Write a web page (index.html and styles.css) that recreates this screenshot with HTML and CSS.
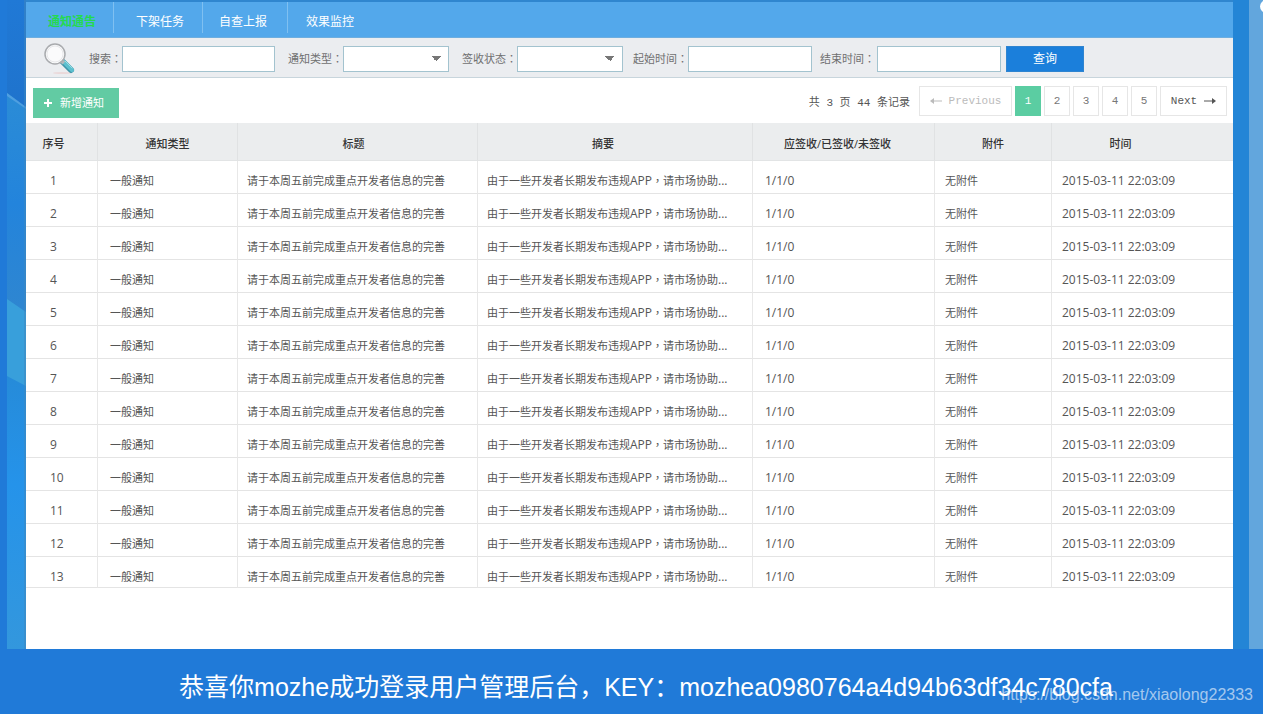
FILE: index.html
```
<!DOCTYPE html>
<html lang="zh-CN">
<head>
<meta charset="utf-8">
<meta name="viewport" content="width=device-width, initial-scale=1">
<title>用户管理后台</title>
<link rel="stylesheet" href="styles.css">
</head>
<body>
<main class="frame">
  <svg class="edge" viewBox="0 0 19 649" preserveAspectRatio="none" aria-hidden="true">
    <defs>
      <linearGradient id="deep" x1="0" y1="0" x2="0" y2="1">
        <stop offset="0" stop-color="#2079d6"/>
        <stop offset="1" stop-color="#1f73cc"/>
      </linearGradient>
      <linearGradient id="mid" x1="0" y1="0" x2="0" y2="1">
        <stop offset="0" stop-color="#2b8cd6"/>
        <stop offset="0.5" stop-color="#2384dc"/>
        <stop offset="1" stop-color="#2f86d0"/>
      </linearGradient>
      <linearGradient id="low" x1="0" y1="0" x2="0" y2="1">
        <stop offset="0" stop-color="#268bd9"/>
        <stop offset="0.4" stop-color="#2593ea"/>
        <stop offset="1" stop-color="#3397dd"/>
      </linearGradient>
    </defs>
    <rect width="19" height="110" fill="url(#deep)"/>
    <path d="M0 93 19 107V314H0Z" fill="url(#mid)"/>
    <path d="M0 93 19 107V109L0 96Z" fill="#4f9fe0"/>
    <path d="M0 299 19 312V388H0Z" fill="#389fdb"/>
    <path d="M0 376 19 386V649H0Z" fill="url(#low)"/>
    <rect x="17" width="2" height="649" fill="#4088be" opacity="0.5"/>
  </svg>

  <div class="panel">
    <nav class="tabs">
      <a class="tab tab-active" href="#">通知通告</a>
      <a class="tab" href="#">下架任务</a>
      <a class="tab" href="#">自查上报</a>
      <a class="tab" href="#">效果监控</a>
    </nav>

    <form class="filters">
      <svg class="magnifier" viewBox="0 0 32 32" aria-hidden="true">
        <ellipse cx="18" cy="30" rx="9" ry="1" fill="#ead9da"/>
        <path d="M19 19 27 27" stroke="#3f95a8" stroke-width="6" stroke-linecap="round"/>
        <path d="M20 19 28 27" stroke="#5cc0cf" stroke-width="4" stroke-linecap="round"/>
        <path d="M21 18 28 25" stroke="#9bdde4" stroke-width="1" stroke-linecap="round"/>
        <path d="M16 17 20 20" stroke="#b3b7bb" stroke-width="4"/>
        <circle cx="11" cy="11" r="10" fill="#fbfbfc" stroke="#a9abae" stroke-width="1.5"/>
        <circle cx="11" cy="11" r="8" fill="none" stroke="#e7e8ea" stroke-width="1"/>
      </svg>
      <label for="keyword">搜索<span class="mark" lang="zh-TW">：</span></label>
      <input class="box keyword" id="keyword" type="text">
      <label for="kind">通知类型<span class="mark" lang="zh-TW">：</span></label>
      <select class="box pick" id="kind"><option></option></select>
      <label for="state">签收状态<span class="mark" lang="zh-TW">：</span></label>
      <select class="box pick pick-state" id="state"><option></option></select>
      <label for="start">起始时间<span class="mark" lang="zh-TW">：</span></label>
      <input class="box date date-start" id="start" type="text">
      <label for="end">结束时间<span class="mark" lang="zh-TW">：</span></label>
      <input class="box date date-end" id="end" type="text">
      <button class="query" type="submit">查询</button>
    </form>

    <div class="toolbar">
      <button class="add" type="button">
        <svg class="plus" viewBox="0 0 8 8" aria-hidden="true"><path d="M4 0V8M0 4H8" stroke="#fff" stroke-width="2"/></svg>
        新增通知
      </button>
      <p class="count">共 3 页 44 条记录</p>
      <div class="pager">
        <button class="page page-prev" type="button" disabled>
          <svg class="arrow" viewBox="0 0 12 8" aria-hidden="true"><path d="M12 4H3" stroke="currentColor"/><path d="M0 4 4 1V7Z" fill="currentColor"/></svg>
          Previous
        </button>
        <button class="page page-current" type="button">1</button>
        <button class="page" type="button">2</button>
        <button class="page" type="button">3</button>
        <button class="page" type="button">4</button>
        <button class="page" type="button">5</button>
        <button class="page page-next" type="button">
          Next
          <svg class="arrow" viewBox="0 0 12 8" aria-hidden="true"><path d="M0 4H9" stroke="currentColor"/><path d="M12 4 8 1V7Z" fill="currentColor"/></svg>
        </button>
      </div>
    </div>

    <table class="notices">
      <colgroup>
        <col class="c-no"><col class="c-kind"><col class="c-title"><col class="c-brief"><col class="c-sign"><col class="c-file"><col class="c-time">
      </colgroup>
      <thead>
        <tr><th>序号</th><th>通知类型</th><th>标题</th><th>摘要</th><th>应签收/已签收/未签收</th><th>附件</th><th>时间</th></tr>
      </thead>
      <tbody>
        <tr><td>1</td><td>一般通知</td><td>请于本周五前完成重点开发者信息的完善</td><td>由于一些开发者长期发布违规<span class="latin">APP</span><span class="mark" lang="zh-TW">，</span>请市场协助<span class="latin">...</span></td><td>1/1/0</td><td>无附件</td><td>2015-03-11 22:03:09</td></tr>
        <tr><td>2</td><td>一般通知</td><td>请于本周五前完成重点开发者信息的完善</td><td>由于一些开发者长期发布违规<span class="latin">APP</span><span class="mark" lang="zh-TW">，</span>请市场协助<span class="latin">...</span></td><td>1/1/0</td><td>无附件</td><td>2015-03-11 22:03:09</td></tr>
        <tr><td>3</td><td>一般通知</td><td>请于本周五前完成重点开发者信息的完善</td><td>由于一些开发者长期发布违规<span class="latin">APP</span><span class="mark" lang="zh-TW">，</span>请市场协助<span class="latin">...</span></td><td>1/1/0</td><td>无附件</td><td>2015-03-11 22:03:09</td></tr>
        <tr><td>4</td><td>一般通知</td><td>请于本周五前完成重点开发者信息的完善</td><td>由于一些开发者长期发布违规<span class="latin">APP</span><span class="mark" lang="zh-TW">，</span>请市场协助<span class="latin">...</span></td><td>1/1/0</td><td>无附件</td><td>2015-03-11 22:03:09</td></tr>
        <tr><td>5</td><td>一般通知</td><td>请于本周五前完成重点开发者信息的完善</td><td>由于一些开发者长期发布违规<span class="latin">APP</span><span class="mark" lang="zh-TW">，</span>请市场协助<span class="latin">...</span></td><td>1/1/0</td><td>无附件</td><td>2015-03-11 22:03:09</td></tr>
        <tr><td>6</td><td>一般通知</td><td>请于本周五前完成重点开发者信息的完善</td><td>由于一些开发者长期发布违规<span class="latin">APP</span><span class="mark" lang="zh-TW">，</span>请市场协助<span class="latin">...</span></td><td>1/1/0</td><td>无附件</td><td>2015-03-11 22:03:09</td></tr>
        <tr><td>7</td><td>一般通知</td><td>请于本周五前完成重点开发者信息的完善</td><td>由于一些开发者长期发布违规<span class="latin">APP</span><span class="mark" lang="zh-TW">，</span>请市场协助<span class="latin">...</span></td><td>1/1/0</td><td>无附件</td><td>2015-03-11 22:03:09</td></tr>
        <tr><td>8</td><td>一般通知</td><td>请于本周五前完成重点开发者信息的完善</td><td>由于一些开发者长期发布违规<span class="latin">APP</span><span class="mark" lang="zh-TW">，</span>请市场协助<span class="latin">...</span></td><td>1/1/0</td><td>无附件</td><td>2015-03-11 22:03:09</td></tr>
        <tr><td>9</td><td>一般通知</td><td>请于本周五前完成重点开发者信息的完善</td><td>由于一些开发者长期发布违规<span class="latin">APP</span><span class="mark" lang="zh-TW">，</span>请市场协助<span class="latin">...</span></td><td>1/1/0</td><td>无附件</td><td>2015-03-11 22:03:09</td></tr>
        <tr><td>10</td><td>一般通知</td><td>请于本周五前完成重点开发者信息的完善</td><td>由于一些开发者长期发布违规<span class="latin">APP</span><span class="mark" lang="zh-TW">，</span>请市场协助<span class="latin">...</span></td><td>1/1/0</td><td>无附件</td><td>2015-03-11 22:03:09</td></tr>
        <tr><td>11</td><td>一般通知</td><td>请于本周五前完成重点开发者信息的完善</td><td>由于一些开发者长期发布违规<span class="latin">APP</span><span class="mark" lang="zh-TW">，</span>请市场协助<span class="latin">...</span></td><td>1/1/0</td><td>无附件</td><td>2015-03-11 22:03:09</td></tr>
        <tr><td>12</td><td>一般通知</td><td>请于本周五前完成重点开发者信息的完善</td><td>由于一些开发者长期发布违规<span class="latin">APP</span><span class="mark" lang="zh-TW">，</span>请市场协助<span class="latin">...</span></td><td>1/1/0</td><td>无附件</td><td>2015-03-11 22:03:09</td></tr>
        <tr><td>13</td><td>一般通知</td><td>请于本周五前完成重点开发者信息的完善</td><td>由于一些开发者长期发布违规<span class="latin">APP</span><span class="mark" lang="zh-TW">，</span>请市场协助<span class="latin">...</span></td><td>1/1/0</td><td>无附件</td><td>2015-03-11 22:03:09</td></tr>
      </tbody>
    </table>
  </div>

  <div class="gutter"><span class="knob"></span></div>
</main>

<footer class="banner">
  <p class="message">恭喜你mozhe成功登录用户管理后台，KEY：mozhea0980764a4d94b63df34c780cfa</p>
  <p class="watermark">https://blog.csdn.net/xiaolong22333</p>
</footer>
</body>
</html>
```

FILE: styles.css
```
* {
  box-sizing: border-box;
}

body {
  display: flex;
  flex-direction: column;
  min-height: 100vh;
  margin: 0;
  background: #207ad8;
  color: #555;
  font: 11px/18px "Open Sans", "Noto Sans CJK SC", sans-serif;
}

p {
  margin: 0;
}

button,
input,
select {
  margin: 0;
  font: inherit;
}

.frame {
  display: grid;
  flex: 1;
  grid-template-columns: 19px 1fr 30px;
  margin-left: 7px;
}

.edge {
  width: 100%;
  height: 100%;
}

.panel {
  border-top: 2px solid #2f86cf;
  background: #fff;
}

.gutter {
  position: relative;
  overflow: hidden;
  background: linear-gradient(90deg, #2385d6 0 16px, #62a6dd 16px);
}

.knob {
  position: absolute;
  top: 0;
  right: -10px;
  width: 13px;
  height: 13px;
  border-radius: 50%;
  background: #fff;
}

/* Tabs */
.tabs {
  display: flex;
  height: 36px;
  border-bottom: 1px solid #6eaedf;
  background: #53a8eb;
}

.tab {
  margin-bottom: 4px;
  padding: 11px 18px 0;
  border-left: 1px solid #7fc0f1;
  color: #fff;
  font-size: 12px;
  text-decoration: none;
}

.tab:nth-child(2) {
  padding-left: 22px;
}

.tab:nth-child(3) {
  padding-left: 16px;
  padding-right: 20px;
}

.tab-active {
  padding-left: 22px;
  padding-right: 17px;
  border-left: 0;
  color: #24da4e;
  font-weight: 700;
}

/* Filters */
.filters {
  display: flex;
  align-items: center;
  height: 40px;
  padding: 2px 0 0 18px;
  border-bottom: 1px solid #c8d5dc;
  background: #ebedf0;
  color: #707070;
  white-space: nowrap;
}

.magnifier {
  flex: none;
  width: 32px;
  height: 32px;
  margin-right: 13px;
}

.mark {
  font-family: "Noto Sans CJK TC", sans-serif;
}

.box {
  height: 26px;
  padding: 0 6px;
  border: 1px solid #a3c3cf;
  border-radius: 0;
  background-color: #fff;
}

.keyword {
  width: 153px;
  margin-right: 13px;
}

.pick {
  width: 106px;
  margin-right: 13px;
  appearance: none;
  background-image: conic-gradient(from 315deg at 50% 100%, #777 90deg, transparent 0);
  background-image: conic-gradient(from 315deg at 50% 100%, #777 90deg, transparent 0);
  background-position: right 7px center;
  background-size: 10px 5px;
  background-repeat: no-repeat;
}

.pick-state {
  margin-right: 10px;
}

.date {
  width: 124px;
}

.date-start {
  margin-right: 8px;
}

.date-end {
  margin-left: 2px;
  margin-right: 5px;
}

.query {
  width: 78px;
  height: 26px;
  padding: 0;
  border: 1px solid #2f84d0;
  background: #1b7fdb;
  color: #fff;
  font-size: 12px;
}

/* Toolbar */
.toolbar {
  display: flex;
  align-items: center;
  height: 45px;
  padding: 4px 6px 0 7px;
}

.add {
  display: flex;
  align-items: center;
  gap: 8px;
  width: 86px;
  height: 30px;
  padding: 0 10px 0 11px;
  border: 0;
  background: #62cba3;
  color: #fff;
  white-space: nowrap;
}

.plus {
  width: 8px;
  height: 8px;
}

.count {
  margin-left: auto;
  font-family: "Liberation Mono", "Noto Sans CJK SC", monospace;
}

.pager {
  display: flex;
  gap: 3px;
  margin: 0 0 4px 9px;
}

.page {
  display: flex;
  align-items: center;
  justify-content: center;
  width: 26px;
  height: 30px;
  padding: 0;
  border: 1px solid #e6e6e6;
  background: #fff;
  color: #777;
  font-family: "Liberation Mono", monospace;
}

.page-current {
  border-color: #5bcda2;
  background: #5bcda2;
  color: #fff;
}

.page-prev {
  gap: 7px;
  width: 93px;
  color: #bbb;
}

.page-next {
  gap: 7px;
  width: 67px;
  color: #555;
}

.arrow {
  width: 12px;
  height: 8px;
}

/* Notices */
.notices {
  width: 100%;
  border-collapse: separate;
  border-spacing: 0;
  table-layout: fixed;
}

.c-no { width: 72px; }
.c-kind { width: 140px; }
.c-title { width: 240px; }
.c-brief { width: 275px; }
.c-sign { width: 182px; }
.c-file { width: 117px; }
.c-time { width: 181px; }

th {
  height: 38px;
  padding: 4px 0 0;
  border-right: 1px solid #e0e2e3;
  border-bottom: 1px solid #e2e4e5;
  background: #ebedee;
  color: #333;
  font-weight: 500;
}

th:nth-child(1) { padding-right: 16px; }
th:nth-child(3) { padding-right: 8px; }
th:nth-child(4) { padding-right: 24px; }
th:nth-child(5) { padding-right: 12px; }
th:nth-child(7) { padding-right: 44px; }

td {
  height: 33px;
  padding: 11px 0 4px 12px;
  border-right: 1px solid #e8e8e8;
  border-bottom: 1px solid #e4e4e4;
  line-height: 16px;
  overflow: hidden;
  white-space: nowrap;
}

th:last-child,
td:last-child {
  border-right: 0;
}

td:nth-child(1) {
  padding-left: 24px;
}

td:nth-child(3),
td:nth-child(4) {
  padding-left: 9px;
}

td:nth-child(6),
td:nth-child(7) {
  padding-left: 10px;
}

td:nth-child(1),
td:nth-child(5),
td:nth-child(7),
.latin {
  font-size: 12px;
}

.latin,
.mark {
  line-height: 12px;
}

tbody tr:last-child td {
  height: 31px;
  padding-bottom: 2px;
}

/* Banner */
.banner {
  position: relative;
  padding: 22px 0 11px 29px;
  color: #fff;
}

.message {
  font: 25px/32px "Liberation Sans", "Noto Sans CJK SC", sans-serif;
  text-align: center;
}

.watermark {
  position: absolute;
  right: 10px;
  bottom: 9px;
  color: rgba(255, 255, 255, 0.6);
  font: 16px/20px "Liberation Sans", sans-serif;
}
```
